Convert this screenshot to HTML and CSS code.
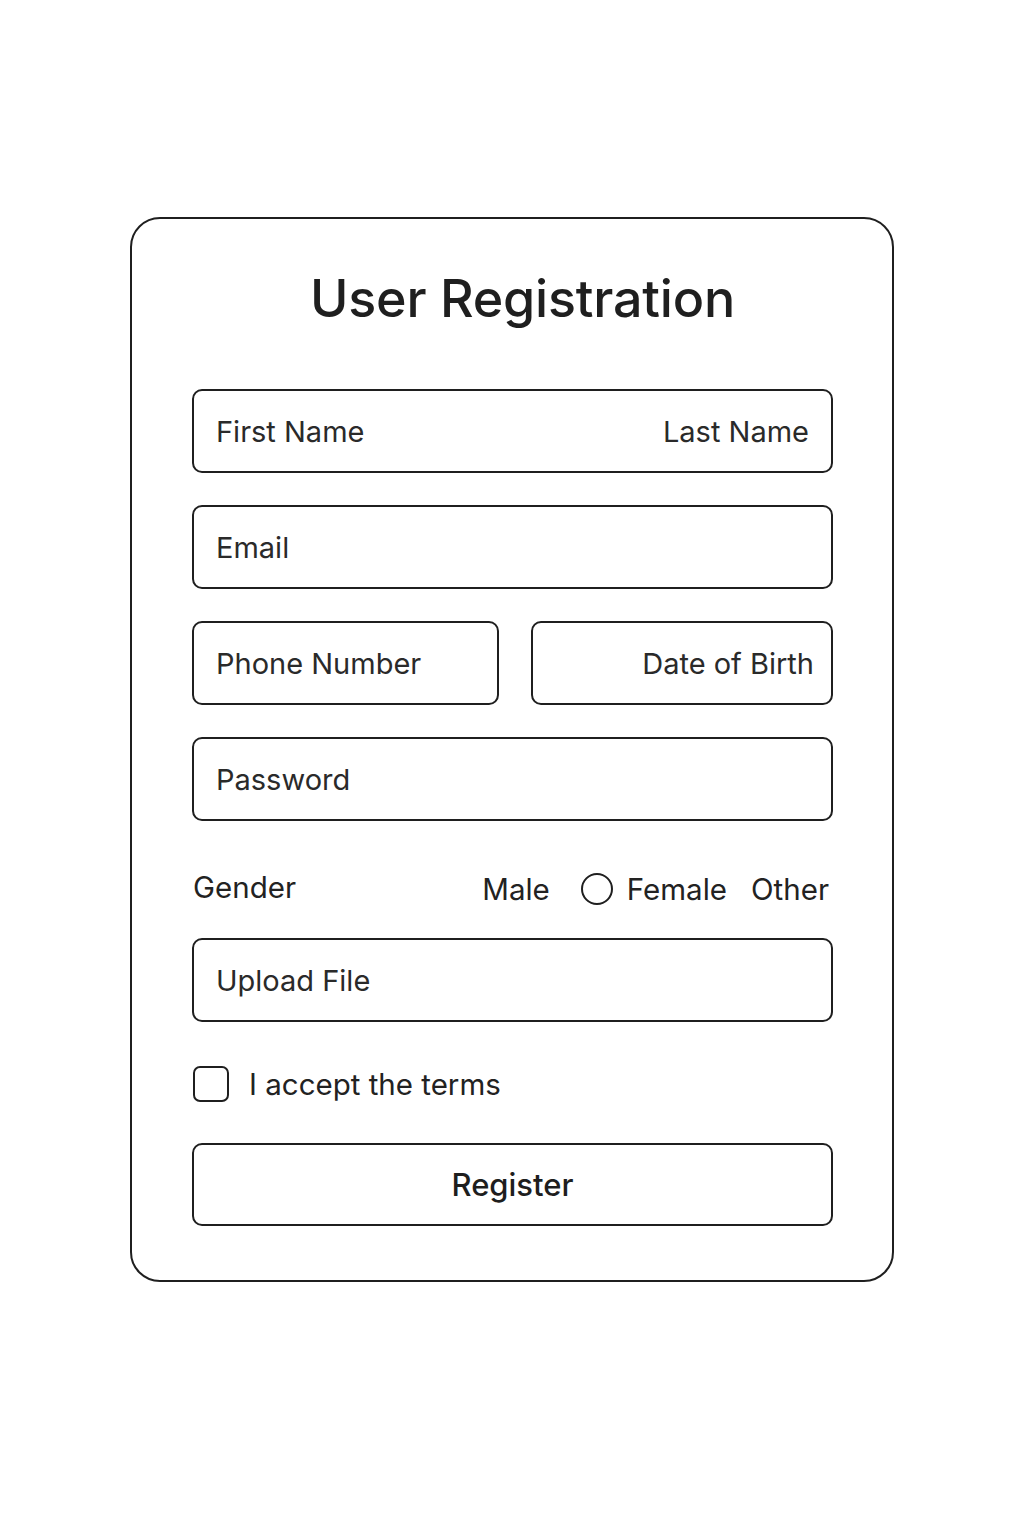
FILE: index.html
```html
<!DOCTYPE html>
<html lang="en">
<head>
<meta charset="utf-8">
<title>User Registration</title>
<link rel="stylesheet" href="styles.css">
</head>
<body>
<main class="page">
  <form class="card">
    <h1 class="title">User Registration</h1>
    <div class="field field-split">
      <span>First Name</span>
      <span>Last Name</span>
    </div>
    <div class="field"><span>Email</span></div>
    <div class="row">
      <div class="field field-half"><span>Phone Number</span></div>
      <div class="field field-half field-right"><span>Date of Birth</span></div>
    </div>
    <div class="field"><span>Password</span></div>
    <div class="gender">
      <span class="gender-label">Gender</span>
      <div class="gender-options">
        <span class="opt">Male</span>
        <span class="radio"></span>
        <span class="opt opt-female">Female</span>
        <span class="opt">Other</span>
      </div>
    </div>
    <div class="field field-upload"><span>Upload File</span></div>
    <label class="terms">
      <span class="checkbox"></span>
      <span>I accept the terms</span>
    </label>
    <div class="button">Register</div>
  </form>
</main>
</body>
</html>
```
FILE: styles.css
```css
* { box-sizing: border-box; }
html, body { margin: 0; padding: 0; background: #fff; }
body {
  font-family: Inter, "Noto Sans", "Liberation Sans", sans-serif;
  color: #222;
}
.page {
  padding-top: 217px;
  padding-left: 130px;
  height: 1536px;
}
.card {
  width: 764px;
  height: 1065px;
  border: 2.5px solid #1f1f1f;
  border-radius: 30px;
  padding: 44px 59px 0 60px;
  display: flex;
  flex-direction: column;
}
.title {
  margin: 0;
  font-size: 52px;
  font-weight: 500;
  line-height: 72px;
  text-align: center;
  letter-spacing: -0.2px;
  color: #1f1f1f;
  padding-left: 20px;
  height: 126px;
}
.field {
  height: 84px;
  border: 2.5px solid #1f1f1f;
  border-radius: 10px;
  display: flex;
  align-items: center;
  padding: 0 22px 0 22px;
  font-size: 29px;
  margin-bottom: 32px;
  color: #2a2a2a;
}
.field-split { justify-content: space-between; }
.row {
  display: flex;
  gap: 32px;
}
.field-half { flex: 1; }
.field-right { justify-content: flex-end; padding-right: 17px; }
.gender {
  display: flex;
  justify-content: space-between;
  align-items: center;
  height: 85px;
  padding-bottom: 14px;
  font-size: 29.5px;
}
.gender-label { padding-left: 1px; margin-top: -4px; }
.gender-options {
  display: flex;
  align-items: center;
  padding-right: 4px;
}
.radio {
  width: 32px;
  height: 32px;
  border: 2.5px solid #1f1f1f;
  border-radius: 50%;
  margin-left: 31px;
  margin-right: 14px;
}
.opt-female { margin-right: 24px; }
.field-upload { margin-bottom: 44px; }
.terms {
  display: flex;
  align-items: center;
  font-size: 29.5px;
  gap: 20px;
  height: 36px;
  margin-bottom: 41px;
  padding-left: 1px;
}
.checkbox {
  width: 36px;
  height: 36px;
  border: 2.5px solid #1f1f1f;
  border-radius: 7px;
}
.button {
  height: 83px;
  border: 2.5px solid #1f1f1f;
  border-radius: 10px;
  display: flex;
  align-items: center;
  justify-content: center;
  font-size: 31px;
  font-weight: 500;
  color: #1e1e1e;
}
```
